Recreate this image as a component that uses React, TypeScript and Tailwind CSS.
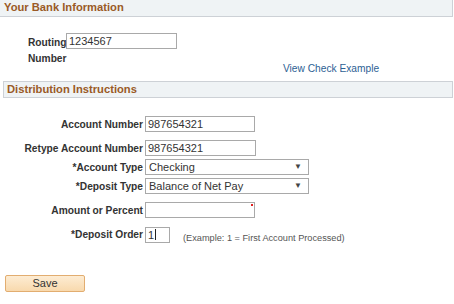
import React from "react";

const label = "text-[10.2px] font-bold text-[#333] leading-[13px]";
const inputCls =
  "h-[16px] border border-[#a9a9a9] bg-white text-[11px] leading-[14px] text-[#333] px-[2px] box-border";

function Row({ lbl, children, mt }: { lbl: string; children: React.ReactNode; mt: string }) {
  return (
    <div className={`flex items-center ${mt}`}>
      <div className={`w-[145px] text-right pr-[2px] ${label}`}>{lbl}</div>
      {children}
    </div>
  );
}

function Select({ value }: { value: string }) {
  return (
    <div className="w-[164px] h-[16px] border border-[#a9a9a9] bg-white box-border flex items-center justify-between pl-[3px] pr-[6px]">
      <span className="text-[11px] leading-[14px] text-[#333]">{value}</span>
      <span className="text-[8px] text-[#444] leading-none">▼</span>
    </div>
  );
}

export default function App() {
  return (
    <div className="w-[454px] h-[304px] bg-white relative" style={{ fontFamily: '"Liberation Sans", Arial, sans-serif' }}>
      <div className="h-[17px] w-[453px] bg-[#eff3f5] border-b border-r border-[#cdd1d6] flex items-center pl-[4px] box-border">
        <span className="text-[11.2px] font-bold text-[#9a5a26] leading-none">Your Bank Information</span>
      </div>
      <div className="flex mt-[16px] pl-[28px]">
        <div className={`${label} leading-[16px] w-[38px] mt-[2px]`}>
          Routing
          <br />
          Number
        </div>
        <div className={`${inputCls} w-[111px]`}>1234567</div>
      </div>
      <div className="flex mt-[-5px] pl-[283px]">
        <span className="text-[10.2px] text-[#2d5f94] leading-[13px]">View Check Example</span>
      </div>
      <div className="mt-[6px] ml-[3px] h-[17px] w-[450px] bg-[#eff3f5] border border-[#cdd1d6] flex items-center pl-[3px] box-border">
        <span className="text-[11.2px] font-bold text-[#9a5a26] leading-none">Distribution Instructions</span>
      </div>
      <Row lbl="Account Number" mt="mt-[18px]">
        <div className={`${inputCls} w-[110px]`}>987654321</div>
      </Row>
      <Row lbl="Retype Account Number" mt="mt-[8px]">
        <div className={`${inputCls} w-[111px]`}>987654321</div>
      </Row>
      <Row lbl="*Account Type" mt="mt-[3px]">
        <Select value="Checking" />
      </Row>
      <Row lbl="*Deposit Type" mt="mt-[3px]">
        <Select value="Balance of Net Pay" />
      </Row>
      <Row lbl="Amount or Percent" mt="mt-[8px]">
        <div className={`${inputCls} w-[110px] relative`}>
          <span className="absolute right-[1px] top-[1px] w-[2px] h-[2px] bg-[#e02020]" />
        </div>
      </Row>
      <Row lbl="*Deposit Order" mt="mt-[7px]">
        <div className={`${inputCls} w-[25px] flex items-center`}>
          1<span className="w-px h-[11px] bg-[#222] ml-px" />
        </div>
        <span className="ml-[13px] mt-[7px] text-[9.2px] text-[#555] leading-[12px]">
          (Example: 1 = First Account Processed)
        </span>
      </Row>
      <div className="mt-[31px] ml-[5px] w-[80px] h-[17px] bg-gradient-to-b from-[#fdecd3] to-[#f8d9ad] border border-[#e2ad70] rounded-[2px] flex items-center justify-center box-border">
        <span className="text-[11px] text-[#333] leading-none">Save</span>
      </div>
    </div>
  );
}
